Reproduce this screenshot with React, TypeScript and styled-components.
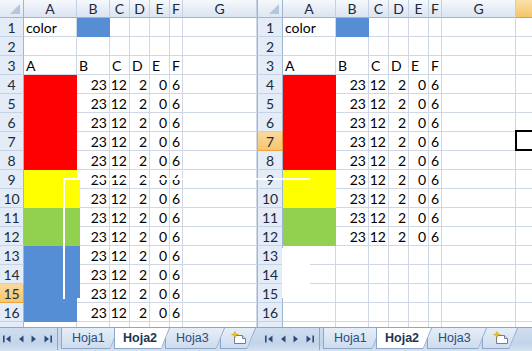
import React from 'react';
import styled, { createGlobalStyle, css } from 'styled-components';

const GlobalStyle = createGlobalStyle`
  html, body { margin: 0; padding: 0; background: #fff; }
  body { font-family: Lato, "Liberation Sans", sans-serif; }
`;

const GRID = '#d0d7e5';
const HEAD_LINE = '#9eb6ce';
const TAB_LINE = '#8ba8cc';

const fills = {
  red: '#ff0000',
  yellow: '#ffff00',
  green: '#92d050',
  blue: '#558ed5',
};

const COLS = ['A', 'B', 'C', 'D', 'E', 'F', 'G'];
const COL_W = [53, 33, 20, 20, 20, 13, 74];
const NUMBERS = ['23', '12', '2', '0', '6'];

type PaneSpec = {
  width: number;
  rowHeaderWidth: number;
  withH: boolean;
  lastRow: number;
  activeRow: number;
  activeCol?: string;
  selected?: { row: number; col: string };
  edge?: boolean;
  tabOffset: number;
};

const fillForRow = (r: number) => {
  if (r >= 4 && r <= 8) return fills.red;
  if (r >= 9 && r <= 10) return fills.yellow;
  if (r >= 11 && r <= 12) return fills.green;
  if (r >= 13 && r <= 16) return fills.blue;
  return undefined;
};

const Screen = styled.div`
  position: relative;
  display: flex;
  width: 532px;
  height: 351px;
  overflow: hidden;
  background: #fff;
`;

const Pane = styled.div<{ $w: number }>`
  display: flex;
  flex-direction: column;
  width: ${(p) => p.$w}px;
  flex: none;
  overflow: hidden;
`;

const Sheet = styled.div<{ $cols: string }>`
  display: grid;
  grid-template-columns: ${(p) => p.$cols};
  grid-template-rows: 18px repeat(17, 19px);
  height: 327px;
  overflow: hidden;
  flex: none;
`;

const headerBase = css`
  box-sizing: border-box;
  display: flex;
  align-items: center;
  justify-content: center;
  font-size: 14px;
  color: #1c2a3d;
  white-space: nowrap;
`;

const Corner = styled.div<{ $edge?: boolean }>`
  ${headerBase};
  position: relative;
  background: linear-gradient(#f4f7fb, #dfe7f2);
  border-right: 1px solid ${HEAD_LINE};
  border-bottom: 1px solid ${HEAD_LINE};
  ${(p) => p.$edge && `border-left: 1px solid ${HEAD_LINE};`}

  &::after {
    content: '';
    position: absolute;
    right: 3px;
    bottom: 3px;
    border-style: solid;
    border-width: 0 0 10px 10px;
    border-color: transparent transparent #b4c6de transparent;
  }
`;

const ColHeader = styled.div<{ $active?: boolean }>`
  ${headerBase};
  background: ${(p) =>
    p.$active
      ? 'linear-gradient(#fbe1ac, #f5c569)'
      : 'linear-gradient(#f6f9fc 0%, #e8eef7 50%, #dbe4f1 100%)'};
  border-right: 1px solid ${(p) => (p.$active ? '#f2a33f' : '#c3d1e3')};
  border-bottom: 1px solid ${(p) => (p.$active ? '#f29536' : HEAD_LINE)};
`;

const RowHeader = styled.div<{ $active?: boolean; $edge?: boolean }>`
  ${headerBase};
  background: ${(p) => (p.$active ? 'linear-gradient(#fad9a0, #f5c66c)' : '#e4ecf7')};
  border-right: 1px solid ${(p) => (p.$active ? '#f29536' : HEAD_LINE)};
  border-bottom: 1px solid ${(p) => (p.$active ? '#f2a33f' : '#c5d3e6')};
  ${(p) => p.$edge && `border-left: 1px solid ${HEAD_LINE};`}
`;

const Cell = styled.div<{ $fill?: string; $right?: boolean; $selected?: boolean }>`
  box-sizing: border-box;
  position: relative;
  display: flex;
  align-items: flex-end;
  justify-content: ${(p) => (p.$right ? 'flex-end' : 'flex-start')};
  padding: 0 2px;
  background: ${(p) => p.$fill ?? '#fff'};
  border-right: 1px solid ${(p) => p.$fill ?? GRID};
  border-bottom: 1px solid ${(p) => p.$fill ?? GRID};
  font-size: 14px;
  line-height: 17px;
  color: #000;
  white-space: nowrap;

  ${(p) =>
    p.$selected &&
    css`
      z-index: 2;
      &::after {
        content: '';
        position: absolute;
        inset: -2px -2px -1px -1px;
        border: 2px solid #000;
      }
    `}
`;

/* tab strip */

const TabBar = styled.div<{ $offset: number }>`
  box-sizing: border-box;
  height: 24px;
  flex: none;
  display: flex;
  align-items: flex-start;
  padding-left: ${(p) => p.$offset}px;
  background: linear-gradient(#cfddef, #c2d4eb 70%, #d6e2f2);
  border-top: 1px solid ${TAB_LINE};
`;

const Nav = styled.div`
  box-sizing: border-box;
  width: 58px;
  height: 22px;
  display: flex;
  align-items: center;
  justify-content: space-between;
  padding: 0 5px 0 3px;
  border-right: 1px solid ${TAB_LINE};
  margin-right: 3px;
  flex: none;
`;

const Tab = styled.div<{ $w: number; $z: number }>`
  box-sizing: border-box;
  width: ${(p) => p.$w}px;
  height: 21px;
  margin-right: -5px;
  flex: none;
  padding: 0 1px 1px 1px;
  background: ${TAB_LINE};
  clip-path: polygon(0 0, 100% 0, calc(100% - 9px) 100%, 0 100%);
  position: relative;
  z-index: ${(p) => p.$z};
`;

const TabFace = styled.div<{ $active?: boolean }>`
  box-sizing: border-box;
  height: 100%;
  display: flex;
  align-items: center;
  padding-left: ${(p) => (p.$active ? 8 : 10)}px;
  clip-path: polygon(0 0, 100% 0, calc(100% - 8px) 100%, 0 100%);
  background: ${(p) => (p.$active ? '#fff' : 'linear-gradient(#e6eef8, #cfdcee)')};
  font-family: 'Liberation Sans', Arial, sans-serif;
  font-size: 12.5px;
  font-weight: ${(p) => (p.$active ? 700 : 400)};
  color: ${(p) => (p.$active ? '#1e3556' : '#2a4c7d')};
`;

const Smear = styled.div<{ $x: number; $y: number; $w: number; $h: number; $c: string }>`
  position: absolute;
  left: ${(p) => p.$x}px;
  top: ${(p) => p.$y}px;
  width: ${(p) => p.$w}px;
  height: ${(p) => p.$h}px;
  background: ${(p) => p.$c};
  z-index: 5;
`;

const Arrow = ({ dir, bar }: { dir: 'l' | 'r'; bar?: boolean }) => (
  <svg width={bar ? 8 : 5} height="8" viewBox={bar ? '0 0 8 8' : '0 0 5 8'}>
    {dir === 'l' ? (
      <>
        {bar && <rect x="0" y="0.5" width="1.6" height="7" fill="#2b4a78" />}
        <path d={bar ? 'M7.5 0.5 L3 4 L7.5 7.5 Z' : 'M4.5 0.5 L0 4 L4.5 7.5 Z'} fill="#2b4a78" />
      </>
    ) : (
      <>
        <path d="M0.5 0.5 L5 4 L0.5 7.5 Z" fill="#2b4a78" />
        {bar && <rect x="6.4" y="0.5" width="1.6" height="7" fill="#2b4a78" />}
      </>
    )}
  </svg>
);

const NewSheetIcon = () => (
  <svg width="16" height="14" viewBox="0 0 16 14">
    <path d="M3.5 4.5 H11.5 L14.5 7.5 V12.5 H3.5 Z" fill="#fff" stroke="#6d7f9a" />
    <path d="M11.5 4.5 V7.5 H14.5" fill="#dde6f1" stroke="#6d7f9a" />
    <path d="M4 0.5 L5 3 L7.5 3.5 L5 4.3 L4 7 L3 4.3 L0.5 3.5 L3 3 Z" fill="#f5c518" stroke="#c99a00" strokeWidth="0.5" />
  </svg>
);

const renderRow = (spec: PaneSpec, r: number) => {
  const cells: React.ReactNode[] = [];
  cells.push(
    <RowHeader key={`h${r}`} $active={r === spec.activeRow} $edge={spec.edge}>
      {r}
    </RowHeader>
  );
  const cols = spec.withH ? [...COLS, 'H'] : COLS;
  cols.forEach((c, i) => {
    let text: string | undefined;
    let fill: string | undefined;
    let right = false;
    if (r === 1 && c === 'A') text = 'color';
    if (r === 1 && c === 'B') fill = fills.blue;
    if (r === 3 && i < 6) text = c;
    if (r >= 4 && r <= spec.lastRow) {
      if (c === 'A') fill = fillForRow(r);
      if (i >= 1 && i <= 5) {
        text = NUMBERS[i - 1];
        right = true;
      }
    }
    const selected = spec.selected && spec.selected.row === r && spec.selected.col === c;
    cells.push(
      <Cell key={`${c}${r}`} $fill={fill} $right={right} $selected={selected}>
        {text}
      </Cell>
    );
  });
  return cells;
};

const SheetPane = ({ spec }: { spec: PaneSpec }) => {
  const widths = spec.withH ? [...COL_W, 74] : COL_W;
  const template = [spec.rowHeaderWidth, ...widths].map((w) => `${w}px`).join(' ');
  const rows = Array.from({ length: 17 }, (_, i) => i + 1);

  return (
    <Pane $w={spec.width}>
      <Sheet $cols={template}>
        <Corner $edge={spec.edge} />
        {COLS.map((c) => (
          <ColHeader key={c} $active={spec.activeCol === c}>
            {c}
          </ColHeader>
        ))}
        {spec.withH && <ColHeader $active={spec.activeCol === 'H'}>H</ColHeader>}
        {rows.map((r) => renderRow(spec, r))}
      </Sheet>
      <TabBar $offset={spec.tabOffset}>
        <Nav>
          <Arrow dir="l" bar />
          <Arrow dir="l" />
          <Arrow dir="r" />
          <Arrow dir="r" bar />
        </Nav>
        <Tab $w={58} $z={4}>
          <TabFace>Hoja1</TabFace>
        </Tab>
        <Tab $w={56} $z={6}>
          <TabFace $active>Hoja2</TabFace>
        </Tab>
        <Tab $w={60} $z={3}>
          <TabFace>Hoja3</TabFace>
        </Tab>
        <Tab $w={36} $z={2}>
          <TabFace>
            <NewSheetIcon />
          </TabFace>
        </Tab>
      </TabBar>
    </Pane>
  );
};

const leftPane: PaneSpec = {
  width: 257,
  rowHeaderWidth: 24,
  withH: false,
  lastRow: 16,
  activeRow: 15,
  tabOffset: 0,
};

const rightPane: PaneSpec = {
  width: 275,
  rowHeaderWidth: 26,
  withH: true,
  lastRow: 12,
  activeRow: 7,
  activeCol: 'H',
  selected: { row: 7, col: 'H' },
  edge: true,
  tabOffset: 5,
};

const App = () => (
  <>
    <GlobalStyle />
    <Screen>
      <SheetPane spec={leftPane} />
      <SheetPane spec={rightPane} />
      {/* redraw smears left in the capture */}
      <Smear $x={77} $y={178} $w={3} $h={30} $c={fills.yellow} />
      <Smear $x={77} $y={208} $w={3} $h={38} $c={fills.green} />
      <Smear $x={77} $y={246} $w={3} $h={52} $c={fills.blue} />
      <Smear $x={63} $y={178} $w={247} $h={2} $c="#fff" />
      <Smear $x={63} $y={178} $w={2} $h={121} $c="#fff" />
      <Smear $x={282} $y={248} $w={28} $h={50} $c="#fff" />
    </Screen>
  </>
);

export default App;
